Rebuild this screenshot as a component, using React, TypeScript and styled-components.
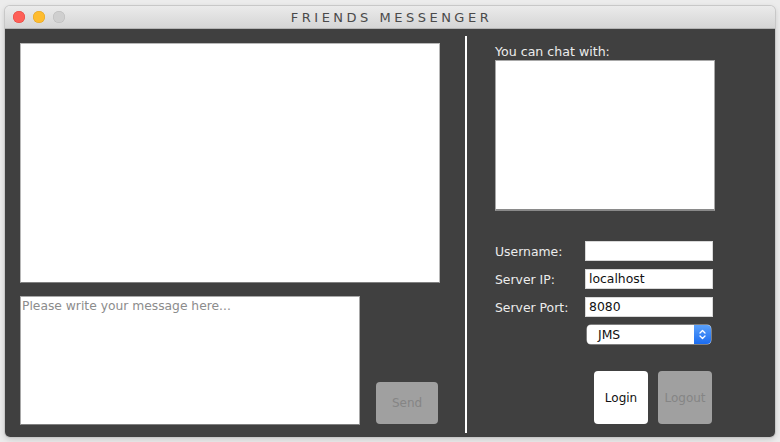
import React from "react";
import styled, { createGlobalStyle } from "styled-components";

const GlobalStyle = createGlobalStyle`
  html, body {
    margin: 0;
    padding: 0;
    background: #ececec;
    font-family: "DejaVu Sans", "Liberation Sans", sans-serif;
  }
`;

const Page = styled.div`
  width: 780px;
  height: 442px;
  padding: 6px 5px 5px 5px;
  box-sizing: border-box;
`;

const Window = styled.div`
  height: 431px;
  display: flex;
  flex-direction: column;
  border-radius: 5px;
  overflow: hidden;
  box-shadow: 0 0 0 1px #c8c8c8, 0 2px 6px rgba(0, 0, 0, 0.18);
`;

const TitleBar = styled.div`
  height: 22px;
  flex-shrink: 0;
  position: relative;
  display: flex;
  align-items: center;
  justify-content: center;
  background: linear-gradient(#ebebeb, #d5d5d5);
  border-bottom: 1px solid #b4b4b4;
`;

const Lights = styled.div`
  position: absolute;
  left: 8px;
  top: 5px;
  display: flex;
  gap: 8px;
`;

const Light = styled.span<{ $color: string; $edge: string }>`
  width: 12px;
  height: 12px;
  border-radius: 50%;
  background: ${(p) => p.$color};
  box-shadow: inset 0 0 0 0.5px ${(p) => p.$edge};
`;

const Title = styled.div`
  font-size: 13px;
  letter-spacing: 3.5px;
  color: #4a4a4a;
  padding-left: 3px;
`;

const Body = styled.div`
  flex: 1;
  display: flex;
  background: #404040;
`;

const LeftColumn = styled.div`
  width: 460px;
  box-sizing: border-box;
  padding: 14px 0 0 15px;
  display: flex;
  flex-direction: column;
  gap: 13px;
`;

const ChatBox = styled.div`
  width: 420px;
  height: 240px;
  box-sizing: border-box;
  background: #fff;
  border: 1px solid #b8b8b8;
  border-bottom-color: #808080;
`;

const InputRow = styled.div`
  display: flex;
  align-items: flex-end;
  gap: 16px;
`;

const MessageInput = styled.div`
  width: 340px;
  height: 129px;
  box-sizing: border-box;
  background: #fff;
  border: 1px solid #a8a8a8;
  border-bottom-color: #808080;
  padding: 2px 1px;
  font-size: 12.3px;
  color: #8c8c8c;
`;

const GrayButton = styled.div<{ $w: number; $h: number }>`
  width: ${(p) => p.$w}px;
  height: ${(p) => p.$h}px;
  display: flex;
  align-items: center;
  justify-content: center;
  border-radius: 4px;
  background: #a0a0a0;
  color: #858585;
  font-size: 12px;
  margin-bottom: 1px;
`;

const WhiteButton = styled(GrayButton)`
  background: #fff;
  color: #111;
`;

const Divider = styled.div`
  width: 2px;
  margin: 7px 0 4px 0;
  background: #fff;
`;

const RightColumn = styled.div`
  padding: 15px 0 0 28px;
  display: flex;
  flex-direction: column;
`;

const Caption = styled.div`
  font-size: 12.6px;
  color: #ececec;
  height: 16px;
  line-height: 16px;
`;

const FriendList = styled.div`
  width: 220px;
  height: 151px;
  box-sizing: border-box;
  background: #fff;
  border: 1px solid #a8a8a8;
  border-bottom: 2px solid #8a8a8a;
`;

const Form = styled.div`
  margin-top: 30px;
  display: grid;
  grid-template-columns: 90px 128px;
  row-gap: 8px;
  align-items: center;
`;

const Label = styled.div`
  font-size: 12.4px;
  color: #ececec;
`;

const Field = styled.div`
  height: 20px;
  box-sizing: border-box;
  background: #fff;
  border: 1px solid #d8d8d8;
  padding: 0 3px;
  font-size: 12.4px;
  line-height: 18px;
  color: #111;
`;

const Select = styled.div`
  grid-column: 2;
  margin-left: 2px;
  width: 124px;
  height: 19px;
  display: flex;
  border-radius: 4px;
  overflow: hidden;
  background: #fff;
  box-shadow: 0 0 0 0.5px #bdbdbd;
`;

const SelectValue = styled.div`
  flex: 1;
  padding-left: 11px;
  font-size: 12.4px;
  line-height: 19px;
  color: #111;
`;

const Stepper = styled.div`
  width: 17px;
  display: flex;
  align-items: center;
  justify-content: center;
  background: linear-gradient(#5ba1fb, #1b6cf0);
`;

const ButtonRow = styled.div`
  margin-top: 27px;
  margin-left: 99px;
  display: flex;
  gap: 10px;
`;

export default function App() {
  return (
    <>
      <GlobalStyle />
      <Page>
        <Window>
          <TitleBar>
            <Lights>
              <Light $color="#fe5f57" $edge="#e0443e" />
              <Light $color="#febc2e" $edge="#dea123" />
              <Light $color="#cfcfcf" $edge="#b9b9b9" />
            </Lights>
            <Title>FRIENDS MESSENGER</Title>
          </TitleBar>
          <Body>
            <LeftColumn>
              <ChatBox />
              <InputRow>
                <MessageInput>Please write your message here...</MessageInput>
                <GrayButton $w={62} $h={42}>Send</GrayButton>
              </InputRow>
            </LeftColumn>
            <Divider />
            <RightColumn>
              <Caption>You can chat with:</Caption>
              <FriendList />
              <Form>
                <Label>Username:</Label>
                <Field />
                <Label>Server IP:</Label>
                <Field>localhost</Field>
                <Label>Server Port:</Label>
                <Field>8080</Field>
                <Select>
                  <SelectValue>JMS</SelectValue>
                  <Stepper>
                    <svg width="9" height="13" viewBox="0 0 9 13">
                      <path d="M2 5 L4.5 2.5 L7 5 M2 8 L4.5 10.5 L7 8" fill="none" stroke="#fff" strokeWidth="1.3" strokeLinecap="round" strokeLinejoin="round" />
                    </svg>
                  </Stepper>
                </Select>
              </Form>
              <ButtonRow>
                <WhiteButton $w={54} $h={53}>Login</WhiteButton>
                <GrayButton $w={54} $h={53}>Logout</GrayButton>
              </ButtonRow>
            </RightColumn>
          </Body>
        </Window>
      </Page>
    </>
  );
}
